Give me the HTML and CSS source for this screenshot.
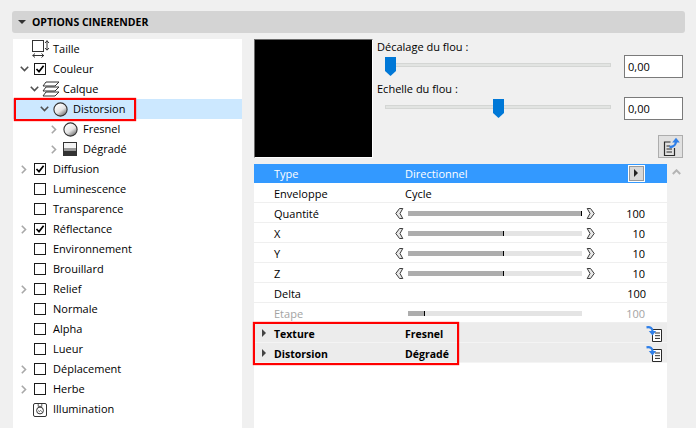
FILE: index.html
```html
<!DOCTYPE html>
<html lang="fr">
<head>
<meta charset="utf-8">
<title>Options Cinerender</title>
<link rel="stylesheet" href="styles.css">
</head>
<body>
<svg class="defs" width="0" height="0">
  <symbol id="chev-down" viewBox="0 0 9 6"><path d="M.8.8 4.5 4.5 8.2.8" fill="none" stroke="#505050" stroke-width="1.6"/></symbol>
  <symbol id="chev-right" viewBox="0 0 6 9"><path d="M.8.8 4.5 4.5.8 8.2" fill="none" stroke="#a8a8a8" stroke-width="1.6"/></symbol>
  <symbol id="tick" viewBox="0 0 12 12"><rect x=".5" y=".5" width="11" height="11" fill="#fff" stroke="#1a1a1a"/><path d="M2.5 6 5 8.6 9.6 2.8" fill="none" stroke="#000" stroke-width="1.7"/></symbol>
  <symbol id="box" viewBox="0 0 12 12"><rect x=".5" y=".5" width="11" height="11" fill="#fff" stroke="#1a1a1a"/></symbol>
  <linearGradient id="sph" x1="0.2" y1="0.1" x2="0.8" y2="0.95"><stop offset="0" stop-color="#fff"/><stop offset=".55" stop-color="#e4e4e4"/><stop offset="1" stop-color="#6e6e6e"/></linearGradient>
  <symbol id="sphere" viewBox="0 0 15 15"><circle cx="7.5" cy="7.5" r="6.6" fill="url(#sph)" stroke="#333" stroke-width="1.1"/></symbol>
  <symbol id="dl" viewBox="0 0 9 11"><path d="M4.5.5.8 5.5 4.5 10.5H7.8L5 5.5 7.8.5Z" fill="#e8e8e8" stroke="#3c3c3c" stroke-width="1"/></symbol>
  <symbol id="dr" viewBox="0 0 9 11"><path d="M4.5.5 8.2 5.5 4.5 10.5H1.2L4 5.5 1.2.5Z" fill="#e8e8e8" stroke="#3c3c3c" stroke-width="1"/></symbol>
  <symbol id="thumb" viewBox="0 0 11 19"><path d="M0 0H11V14L5.5 19 0 14Z" fill="#0078d7"/></symbol>
  <symbol id="load" viewBox="0 0 16 16"><path d="M6.5 3.5H15.5V15.5H6.5Z" fill="#fff" stroke="#2a2a2a"/><path d="M9 7H14M9 9.7H14M9 12.4H14" stroke="#2a2a2a"/><path d="M.5 1.3C4.5.6 6.4 2 6.6 5.5" fill="none" stroke="#2f7fe8" stroke-width="2.2"/><path d="M2.8 5H10.2L6.5 9.5Z" fill="#2f7fe8"/></symbol>
</svg>

<header class="panel-head"><span class="head-arrow"></span><span>OPTIONS CINERENDER</span></header>

<main class="content">
  <nav class="tree">
    <div class="node lv0"><span class="chev"></span><span class="slot wide">
      <svg width="18" height="18" viewBox="0 0 18 18"><rect x=".5" y=".5" width="11" height="11" fill="#fff" stroke="#333"/><path d="M15 .5V10M13 3 15 .8 17 3M13 8 15 10.2 17 8" fill="none" stroke="#333"/><path d="M.5 15.5H12M3 13.5 .8 15.5 3 17.5M9.5 13.5 11.7 15.5 9.5 17.5" fill="none" stroke="#333"/></svg></span>
      <span>Taille</span></div>
    <div class="node lv0"><svg class="chev-d" width="9" height="6"><use href="#chev-down"/></svg><span class="slot chk"><svg width="12" height="12"><use href="#tick"/></svg></span><span>Couleur</span></div>
    <div class="node lv1"><svg class="chev-d" width="9" height="6"><use href="#chev-down"/></svg><span class="slot wide">
      <svg width="18" height="16" viewBox="0 0 18 16"><path d="M4 1H17L13 5H1ZM4 6H17L13 10H1ZM4 11H17L13 15H1Z" fill="#fff" stroke="#333"/></svg></span>
      <span>Calque</span></div>
    <div class="node lv2 selected"><svg class="chev-d" width="9" height="6"><use href="#chev-down"/></svg><span class="slot"><svg width="15" height="15"><use href="#sphere"/></svg></span><span>Distorsion</span><i class="mark mark-node"></i></div>
    <div class="node lv3"><svg class="chev-r" width="6" height="9"><use href="#chev-right"/></svg><span class="slot"><svg width="15" height="15"><use href="#sphere"/></svg></span><span>Fresnel</span></div>
    <div class="node lv3"><svg class="chev-r" width="6" height="9"><use href="#chev-right"/></svg><span class="slot">
      <svg width="14" height="14" viewBox="0 0 14 14"><rect width="14" height="14" fill="#333"/><rect x="1" y="1" width="12" height="5" fill="#f4f4f4"/><rect x="1" y="6" width="12" height="3" fill="#9a9a9a"/></svg></span>
      <span>Dégradé</span></div>
    <div class="node lv0"><svg class="chev-r" width="6" height="9"><use href="#chev-right"/></svg><span class="slot chk"><svg width="12" height="12"><use href="#tick"/></svg></span><span>Diffusion</span></div>
    <div class="node lv0"><span class="chev"></span><span class="slot chk"><svg width="12" height="12"><use href="#box"/></svg></span><span>Luminescence</span></div>
    <div class="node lv0"><span class="chev"></span><span class="slot chk"><svg width="12" height="12"><use href="#box"/></svg></span><span>Transparence</span></div>
    <div class="node lv0"><svg class="chev-r" width="6" height="9"><use href="#chev-right"/></svg><span class="slot chk"><svg width="12" height="12"><use href="#tick"/></svg></span><span>Réflectance</span></div>
    <div class="node lv0"><span class="chev"></span><span class="slot chk"><svg width="12" height="12"><use href="#box"/></svg></span><span>Environnement</span></div>
    <div class="node lv0"><span class="chev"></span><span class="slot chk"><svg width="12" height="12"><use href="#box"/></svg></span><span>Brouillard</span></div>
    <div class="node lv0"><svg class="chev-r" width="6" height="9"><use href="#chev-right"/></svg><span class="slot chk"><svg width="12" height="12"><use href="#box"/></svg></span><span>Relief</span></div>
    <div class="node lv0"><span class="chev"></span><span class="slot chk"><svg width="12" height="12"><use href="#box"/></svg></span><span>Normale</span></div>
    <div class="node lv0"><span class="chev"></span><span class="slot chk"><svg width="12" height="12"><use href="#box"/></svg></span><span>Alpha</span></div>
    <div class="node lv0"><span class="chev"></span><span class="slot chk"><svg width="12" height="12"><use href="#box"/></svg></span><span>Lueur</span></div>
    <div class="node lv0"><svg class="chev-r" width="6" height="9"><use href="#chev-right"/></svg><span class="slot chk"><svg width="12" height="12"><use href="#box"/></svg></span><span>Déplacement</span></div>
    <div class="node lv0"><svg class="chev-r" width="6" height="9"><use href="#chev-right"/></svg><span class="slot chk"><svg width="12" height="12"><use href="#box"/></svg></span><span>Herbe</span></div>
    <div class="node lv0"><span class="chev"></span><span class="slot">
      <svg width="14" height="15" viewBox="0 0 14 15"><rect x=".5" y="1.5" width="13" height="13" rx="1.5" fill="#fff" stroke="#333"/><circle cx="7" cy="8.5" r="3.4" fill="none" stroke="#333"/><path d="M5.2 1.5V4.4H8.8V1.5M5.2 8.5 6.3 9.5 7.6 8.5 8.8 9.5" fill="none" stroke="#333" stroke-width=".8"/></svg></span>
      <span>Illumination</span></div>
  </nav>

  <section class="side">
    <div class="top">
      <div class="preview"></div>
      <div class="controls">
        <div class="ctl">
          <div class="ctl-label">Décalage du flou :</div>
          <div class="ctl-row">
            <div class="track"><svg class="thumb" style="left:-1px" width="11" height="19"><use href="#thumb"/></svg></div>
            <div class="field">0,00</div>
          </div>
        </div>
        <div class="ctl">
          <div class="ctl-label">Echelle du flou :</div>
          <div class="ctl-row">
            <div class="track"><svg class="thumb" style="left:107px" width="11" height="19"><use href="#thumb"/></svg></div>
            <div class="field">0,00</div>
          </div>
        </div>
        <div class="btn-line">
          <div class="tool-btn"><svg width="20" height="20" viewBox="0 0 20 20"><path d="M9.5 5H3.5V18.5H13.5V11" fill="none" stroke="#2a2a2a" stroke-width="1.2"/><path d="M5.5 9H9M5.5 12H11M5.5 15H11" stroke="#2a2a2a"/><path d="M8.5 10C13 10 14.6 8.5 15 4.5" fill="none" stroke="#2f7fe8" stroke-width="2.4"/><path d="M11.2 5.4 15 .8 18.8 5.4Z" fill="#2f7fe8"/></svg></div>
        </div>
      </div>
    </div>

    <div class="table-wrap">
      <div class="table">
        <div class="row active"><span class="k">Type</span><span class="v">Directionnel</span><span class="menu-btn"></span></div>
        <div class="row"><span class="k">Enveloppe</span><span class="v">Cycle</span></div>
        <div class="row"><span class="k">Quantité</span><svg class="step" width="9" height="11"><use href="#dl"/></svg><div class="bar"><div class="fill" style="width:100%"></div></div><svg class="step" width="9" height="11"><use href="#dr"/></svg><span class="num">100</span></div>
        <div class="row"><span class="k">X</span><svg class="step" width="9" height="11"><use href="#dl"/></svg><div class="bar"><div class="fill" style="width:55%"></div></div><svg class="step" width="9" height="11"><use href="#dr"/></svg><span class="num">10</span></div>
        <div class="row"><span class="k">Y</span><svg class="step" width="9" height="11"><use href="#dl"/></svg><div class="bar"><div class="fill" style="width:55%"></div></div><svg class="step" width="9" height="11"><use href="#dr"/></svg><span class="num">10</span></div>
        <div class="row"><span class="k">Z</span><svg class="step" width="9" height="11"><use href="#dl"/></svg><div class="bar"><div class="fill" style="width:55%"></div></div><svg class="step" width="9" height="11"><use href="#dr"/></svg><span class="num">10</span></div>
        <div class="row"><span class="k">Delta</span><span class="num push">100</span></div>
        <div class="row dim"><span class="k">Etape</span><span class="step-gap"></span><div class="bar"><div class="fill" style="width:10%"></div></div><span class="step-gap"></span><span class="num">100</span></div>
        <div class="group">
          <div class="row sub"><span class="tri"></span><span class="k">Texture</span><span class="v">Fresnel</span><svg class="load" width="16" height="16"><use href="#load"/></svg></div>
          <div class="row sub"><span class="tri"></span><span class="k">Distorsion</span><span class="v">Dégradé</span><svg class="load" width="16" height="16"><use href="#load"/></svg></div>
          <i class="mark mark-group"></i>
        </div>
      </div>
      <div class="scroll"><svg width="9" height="6" viewBox="0 0 9 6"><path d="M.8 5 4.5 1.3 8.2 5" fill="none" stroke="#b4b4b4" stroke-width="2"/></svg></div>
    </div>
  </section>
</main>
</body>
</html>
```

FILE: styles.css
```css
* { box-sizing: border-box; }
html, body { height: 100%; }
body {
  margin: 0;
  width: 696px;
  height: 428px;
  overflow: hidden;
  background: #f0f0f0;
  color: #000;
  font: 11px/20px "Open Sans", "Noto Sans", sans-serif;
  display: flex;
  flex-direction: column;
  padding-top: 11px;
}
.defs { position: absolute; }
.panel-head {
  height: 22px;
  margin: 0 11px 0 12px;
  flex: none;
  background: #d4d4d4;
  border-radius: 3px;
  display: flex;
  align-items: center;
  padding-left: 6px;
  gap: 6px;
  font-weight: 700;
  font-size: 10.5px;
}
.head-arrow { width: 0; height: 0; border: 4px solid transparent; border-top: 4px solid #333; border-bottom: 0; }
.content { flex: 1; display: flex; padding: 6px 0 0 13px; min-height: 0; }

/* tree */
.tree { width: 229px; background: #fff; flex: none; }
.node { position: relative; height: 20px; display: flex; align-items: center; white-space: nowrap; }
.lv0 { padding-left: 7px; }
.lv1 { padding-left: 17px; }
.lv2 { padding-left: 27px; }
.lv3 { padding-left: 37px; }
.selected { background: #cce8ff; }
.chev { width: 13px; flex: none; }
.chev-d { flex: none; margin-right: 4px; }
.chev-r { flex: none; margin: 0 6px 0 1px; }
.slot { width: 20px; flex: none; display: flex; align-items: center; }
.slot svg { flex: none; display: block; }
.slot.chk { padding-left: 1px; }
.slot.wide svg { margin-left: -1px; }

/* annotation frames */
.mark { position: absolute; border: 2px solid #f00; pointer-events: none; box-shadow: 0 0 1px #f00; }
.mark-node { left: 1px; top: -1px; width: 122px; height: 23px; }
.mark-group { left: -1px; top: -1px; width: 206px; height: 43px; }

/* right side */
.side { flex: 1; margin-left: 12px; min-width: 0; display: flex; flex-direction: column; }
.top { display: flex; height: 125px; flex: none; }
.preview {
  width: 119px;
  height: 119px;
  flex: none;
  background: #000;
  border: 1px solid;
  border-color: #6a6a6a #fff #fff #6a6a6a;
}
.controls { flex: 1; padding-left: 4px; display: flex; flex-direction: column; }
.ctl { height: 42px; }
.ctl-label { line-height: 16px; }
.ctl-row { display: flex; align-items: flex-start; height: 22px; }
.track {
  position: relative;
  width: 226px;
  height: 4px;
  margin: 8px 13px 0 8px;
  background: #e2e4e2;
  border: 1px solid #d4d6d4;
}
.thumb { position: absolute; top: -7px; }
.field {
  width: 59px;
  height: 23px;
  background: #fff;
  border: 1px solid #7a7a7a;
  padding-left: 3px;
  line-height: 21px;
}
.btn-line { display: flex; justify-content: flex-end; padding: 12px 13px 0 0; }
.tool-btn {
  width: 25px;
  height: 23px;
  background: #e1e1e1;
  border: 1px solid #adadad;
  display: flex;
  align-items: center;
  justify-content: center;
}

/* table */
.table-wrap { flex: 1; display: flex; min-height: 0; }
.table { width: 413px; background: #fff; }
.row {
  height: 20px;
  display: flex;
  align-items: center;
  padding: 2px 0 0 20px;
  border-bottom: 1px solid #efefef;
  position: relative;
}
.row.active { height: 19px; background: #3399ff; color: #fff; border: 0; padding-top: 0; }
.k { width: 121px; flex: none; }
.v { flex: none; margin-left: 10px; }
.step { flex: none; }
.step-gap { width: 9px; flex: none; }
.bar { width: 174px; height: 5px; margin: 0 4px; background: #e4e4e4; flex: none; }
.fill { height: 100%; background: #adadad; border-right: 1px solid #000; }
.num { width: 50px; text-align: right; flex: none; }
.num.push { margin-left: 201px; }
.dim { color: #a3a3a3; }
.menu-btn {
  position: absolute;
  right: 22px;
  top: 1px;
  width: 17px;
  height: 17px;
  background: #d8d8d8;
  border: 1px solid #fff;
  outline: 1px solid #999;
  outline-offset: -2px;
}
.menu-btn::after {
  content: "";
  position: absolute;
  left: 5px;
  top: 3px;
  border: 4px solid transparent;
  border-left: 4px solid #222;
  border-right: 0;
}
.group { position: relative; font-weight: 700; font-size: 10.5px; }
.sub { background: #ececec; border-bottom-color: #f4f4f4; }
.tri {
  position: absolute;
  left: 8px;
  top: 6px;
  border: 4px solid transparent;
  border-left: 4px solid #444;
  border-right: 0;
}
.sub .v { width: 241px; }
.load { flex: none; }
.scroll { flex: 1; padding: 5px 0 0 5px; }
.scroll svg { display: block; }
```
